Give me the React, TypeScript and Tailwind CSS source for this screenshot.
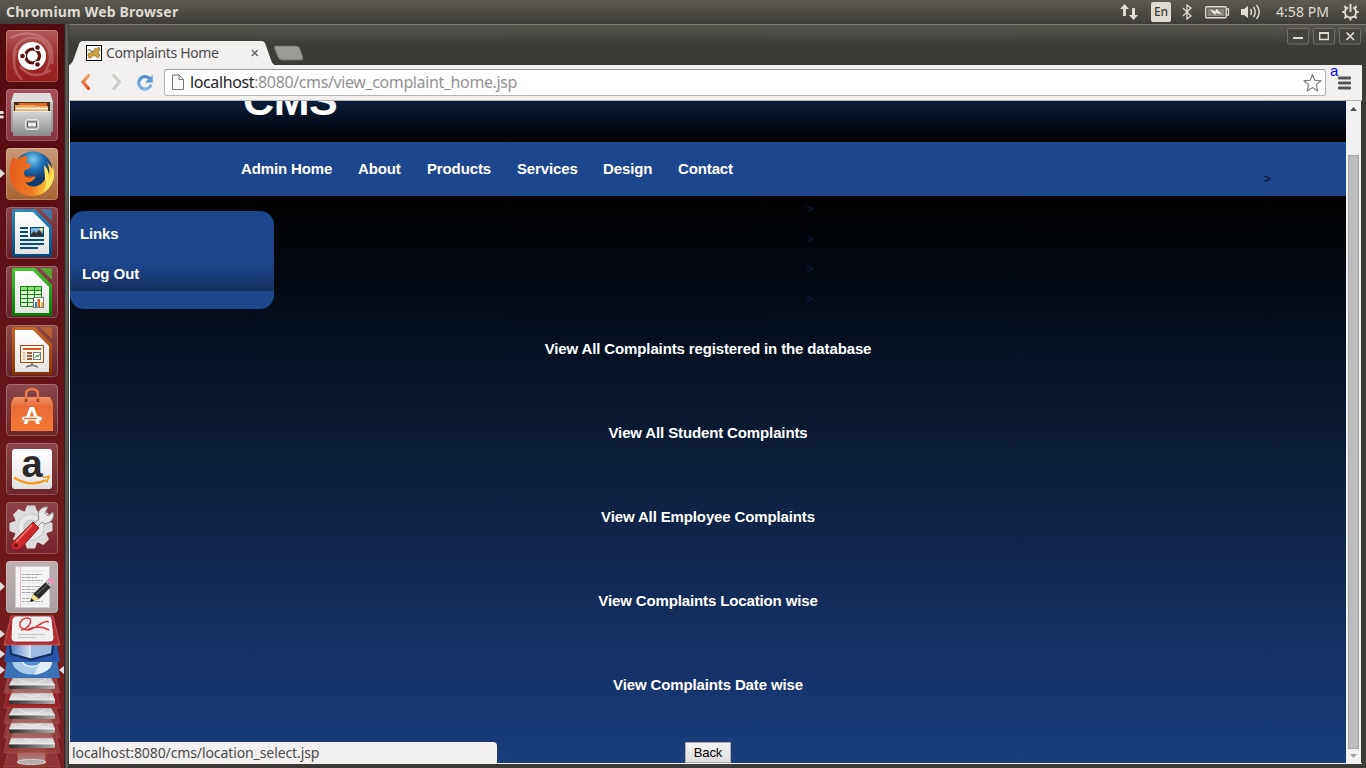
import React from 'react';

const ui = "font-['Noto_Sans','Open_Sans',sans-serif]";

function Tile({ tint, children, marks = 0 }: { tint: string; children: React.ReactNode; marks?: number }) {
  return (
    <div className="relative flex h-[52px] w-[64px] shrink-0 pl-[6px]">
      {marks === 1 && (
        <svg className="absolute left-0 top-[21px]" width="5" height="9">
          <path d="M0 0 L5 4.5 L0 9z" fill="#ddd" />
        </svg>
      )}
      {marks === 2 && (
        <svg className="absolute left-0 top-[22px]" width="5" height="8">
          <path d="M0 0H3L4 1.5L3 3H0zM0 4.5H3L4 6L3 7.500H0z" fill="#ddd" />
        </svg>
      )}
      <div className={`h-[52px] w-[52px] overflow-hidden rounded-[4px] ${tint}`}>
        <svg width="52" height="52" viewBox="0 0 52 52">
          {children}
          <rect x=".5" y=".5" width="51" height="51" rx="3.500" fill="none" stroke="#fff" strokeOpacity=".22" />
        </svg>
      </div>
    </div>
  );
}

function OfficeDoc({ id, light, dark, children }: { id: string; light: string; dark: string; children: React.ReactNode }) {
  return (
    <>
      <defs>
        <linearGradient id={id} x2="0" y2="1">
          <stop stopColor={light} />
          <stop offset="1" stopColor={dark} />
        </linearGradient>
        <linearGradient id={id + 'p'} x2="0" y2="1">
          <stop stopColor="#fff" />
          <stop offset="1" stopColor="#e2e2e2" />
        </linearGradient>
      </defs>
      <path d="M8 2H29L46 19V48Q46 50 44 50H8Q6 50 6 48V4Q6 2 8 2z" fill={`url(#${id})`} />
      <path d="M9 5H27L43 21V47H9z" fill={`url(#${id}p)`} />
      <path d="M34 2H44Q46 2 46 4V14z" fill={light} opacity=".75" />
      {children}
    </>
  );
}

function FoldedTiles() {
  const disks = [
    { top: 678, bottom: 689, fold: 693, tint: '#9b4a4a' },
    { top: 689, bottom: 704, fold: 708, tint: '#a3222a' },
    { top: 708, bottom: 719, fold: 723, tint: '#9b4040' },
    { top: 719, bottom: 733, fold: 738, tint: '#9b4040' },
    { top: 733, bottom: 748, fold: 753, tint: '#9b4040' },
  ];
  return (
    <svg width="64" height="155" viewBox="0 613 64 155" className="shrink-0">
      <defs>
        <linearGradient id="disk" x2="0" y2="1">
          <stop stopColor="#bdbdbd" />
          <stop offset="1" stopColor="#e6e6e6" />
        </linearGradient>
        <linearGradient id="edge">
          <stop stopColor="#2c2c2c" />
          <stop offset="1" stopColor="#b0b0b0" />
        </linearGradient>
        <linearGradient id="boxL">
          <stop stopColor="#4f7fc4" />
          <stop offset="1" stopColor="#d8e4f4" />
        </linearGradient>
        <linearGradient id="bin" x2="0" y2="1">
          <stop stopColor="#9a5252" />
          <stop offset="1" stopColor="#b98484" />
        </linearGradient>
      </defs>
      <path d="M9 750H55L60 767H4z" fill="#9a4040" opacity=".7" stroke="#b96464" strokeWidth=".7" />
      <path d="M17 748H46L45 762H18z" fill="url(#bin)" />
      <ellipse cx="31.500" cy="762" rx="14.500" ry="2.500" fill="#b5b0ae" stroke="#d8d4d2" />
      {[...disks].reverse().map(({ top, bottom, fold, tint }) => (
        <g key={top}>
          <path d={`M8 ${top - 2}H56L60 ${fold}H4z`} fill={tint} opacity=".75" stroke="#c06868" strokeWidth=".5" />
          <path d={`M13 ${top}H51L55 ${bottom - 4}H9z`} fill="url(#disk)" />
          <path d={`M18 ${top + 1}Q32 ${bottom - 1} 46 ${top + 1}`} fill="none" stroke="#f4f4f4" strokeWidth=".8" />
          <path d={`M9 ${bottom - 4}H55V${bottom - 1}L54 ${bottom}H10L9 ${bottom - 1}z`} fill="url(#edge)" />
          <path d={`M9 ${bottom - 4}H55`} stroke="#f2f2f2" strokeWidth=".8" />
        </g>
      ))}
      <path d="M7 660H57L60 678H4z" fill="#3a72b5" />
      <path d="M12 660H52Q52 667 44 672Q32 677 20 672Q12 667 12 660z" fill="#a9cdec" />
      <path d="M34 675Q37 668 41 662H52Q52 672 34 675z" fill="#deebf8" />
      <ellipse cx="32" cy="662" rx="9" ry="4.500" fill="#5b93cf" stroke="#eef6fd" strokeWidth="1.500" />
      <path d="M7 644H57L60 662H4z" fill="#2856a8" />
      <path d="M10 645H31V659L11 654z" fill="url(#boxL)" />
      <path d="M31 645H53L52 654L31 659z" fill="#9bbbe4" />
      <path d="M10 645L11 654L31 659.500L52 654L53 645" fill="none" stroke="#122e62" strokeWidth="2.200" />
      <path d="M11 616H53L60 645H4z" fill="#b02e34" stroke="#d07070" strokeWidth=".7" />
      <path d="M15 617H49Q51 617 51 620L53 638Q53 641 50 641H15Q12 641 12 638L13 619z" fill="#f1f0f0" stroke="#fff" />
      <path d="M21 630C29 629 34 619 28 618C20 617 15 629 27 630C36 630 43 619 49 622M27 630Q38 624 49 630" fill="none" stroke="#dc3434" strokeWidth="1.500" />
      <path d="M18 634.500H45M18 637.500H36" stroke="#bbb" strokeWidth=".8" />
      <path d="M0 630L5 634L0 638zM0 650L5 654L0 658zM0 666L5 670L0 674zM64 666L59 670L64 674z" fill="#ddd" />
    </svg>
  );
}

function Launcher() {
  return (
    <nav className="flex h-[744px] w-[64px] shrink-0 flex-col bg-linear-to-b from-[#520b0f] via-[#68151b] to-[#7c2020] pt-[6px]">
      <div className="flex flex-col gap-[7px]">
        <Tile tint="bg-linear-to-b from-[#b25a5a] via-[#9c2e2e] to-[#981c1c]">
          <path d="M8 30C6 14 18 6 30 8C45 12 48 30 38 44M14 36Q26 52 45 40M4 8Q24 -2 40 10Q48 18 46 34M16 50Q4 38 10 20" fill="none" stroke="#e6b0b0" strokeWidth="2.500" opacity=".35" />
          <circle cx="26" cy="26" r="14" fill="#fff" />
          <circle cx="26.500" cy="26" r="7" fill="none" stroke="#601015" strokeWidth="3.200" />
          <g fill="#601015" stroke="#fff" strokeWidth="1.300">
            <circle cx="16.500" cy="26" r="3" />
            <circle cx="31.500" cy="17.500" r="3" />
            <circle cx="31.500" cy="34.500" r="3" />
          </g>
        </Tile>
        <Tile tint="bg-linear-to-b from-[#a24d59] to-[#863440]" marks={2}>
          <defs>
            <linearGradient id="cab" x2="0" y2="1">
              <stop stopColor="#d6d6d6" />
              <stop offset="1" stopColor="#8a8a8a" />
            </linearGradient>
          </defs>
          <path d="M8 4H44L47 13V43H5V13z" fill="url(#cab)" />
          <path d="M5 13L8 4H44L47 13z" fill="#dedede" />
          <path d="M8 13H44V23H8z" fill="#4a2b1e" />
          <path d="M13 14H41V21H13z" fill="#e06a28" />
          <path d="M9 16H28L30 17H42V22H9z" fill="#f2a458" />
          <path d="M10 19.500H42" stroke="#fff" strokeWidth="1.300" />
          <path d="M7 22H45V47H7z" fill="url(#cab)" />
          <path d="M7 22.500H45" stroke="#eee" />
          <rect x="19.500" y="30.500" width="13" height="10" rx="2" fill="#bbb" stroke="#e8e8e8" />
          <rect x="21.500" y="33" width="9" height="5" fill="#eee" stroke="#555" />
        </Tile>
        <Tile tint="bg-linear-to-b from-[#c99a78] to-[#a66432]" marks={1}>
          <defs>
            <radialGradient id="globe" cx=".5" cy=".2">
              <stop stopColor="#7ecbf0" />
              <stop offset=".5" stopColor="#2075ba" />
              <stop offset="1" stopColor="#123a72" />
            </radialGradient>
            <linearGradient id="fox" x2="1" y2=".2">
              <stop stopColor="#e4571d" />
              <stop offset=".65" stopColor="#f07a20" />
              <stop offset="1" stopColor="#ffd23d" />
            </linearGradient>
          </defs>
          <circle cx="27" cy="23" r="19.500" fill="url(#globe)" />
          <path d="M7 9Q9 12 12 11Q16 7 22 9L20 14L25 17L24 20L19 22Q17 25 19 28Q23 29 28 28Q31 29 28 31Q24 36 19 34Q23 40 31 38Q40 35 41 24L43 27Q44 20 41 14Q48 20 48 29C46 41 37 48 26 48C13 48 4 38 4 27Q3 16 7 9z" fill="url(#fox)" />
          <path d="M38 17Q45 24 42 33L46 27Q48 20 44 14Q49 22 48 29Q45 40 38 44Q42 36 39 30z" fill="#ffe763" />
          <path d="M19 28Q23 31 29 28" stroke="#a92f16" fill="none" />
        </Tile>
        <Tile tint="bg-linear-to-b from-[#8a454a] to-[#632027]">
          <OfficeDoc id="writer" light="#3188bd" dark="#064879">
            <path d="M14 21H22M14 25H22M14 29H22M14 33H38M14 37H38M14 41H32" stroke="#064c7c" strokeWidth="2" />
            <rect x="24.500" y="20.500" width="13" height="9" fill="#79b6df" stroke="#064c7c" />
            <path d="M25 29V27L28 24L30 26L33 23L37 27V29z" fill="#333" />
            <circle cx="35.500" cy="22.500" r="1.500" fill="#ffe16b" />
          </OfficeDoc>
        </Tile>
        <Tile tint="bg-linear-to-b from-[#8a454a] to-[#632027]">
          <OfficeDoc id="calc" light="#4bc532" dark="#087405">
            <path d="M14.500 20.500H35.500V40.500H14.500z" fill="#e2ffdb" stroke="#12840e" />
            <path d="M15 21H35V24H15z" fill="#8fe27d" />
            <path d="M14 24.500H36M14 28.500H36M14 32.500H36M14 36.500H36M21.500 20V41M28.500 20V41" stroke="#12840e" />
            <rect x="27.500" y="31.500" width="10" height="10" fill="#fff" stroke="#777" />
            <path d="M29 36H31V41H29z" fill="#1489ce" />
            <path d="M31.500 33H34V41H31.500z" fill="#e35f13" />
            <path d="M35 36H37V41H35z" fill="#f2ac26" />
          </OfficeDoc>
        </Tile>
        <Tile tint="bg-linear-to-b from-[#914b45] to-[#632027]">
          <OfficeDoc id="impress" light="#c8672d" dark="#843100">
            <rect x="14.500" y="20.500" width="23" height="17" fill="#fff4ed" stroke="#a84712" />
            <path d="M17 24H35" stroke="#d35b18" strokeWidth="2" />
            <path d="M17 28H19M17 31H19M17 34H19" stroke="#e09a6c" strokeWidth="1.700" />
            <path d="M21 28H26M21 31H26M21 34H26" stroke="#842f00" strokeWidth="1.700" />
            <rect x="27.500" y="27.500" width="7" height="7" fill="#fff" stroke="#777" />
            <path d="M29 33L31 30L32 32L34 29" stroke="#33992b" fill="none" />
            <path d="M26 38V40L20 42M26 40L32 42" stroke="#777" fill="none" strokeWidth="1.800" />
          </OfficeDoc>
        </Tile>
        <Tile tint="bg-linear-to-b from-[#8b4749] to-[#6c2529]">
          <defs>
            <linearGradient id="bag" x2="0" y2="1">
              <stop stopColor="#ed9267" />
              <stop offset=".3" stopColor="#e96b36" />
              <stop offset="1" stopColor="#f47735" />
            </linearGradient>
          </defs>
          <path d="M8 13H44L47 19V47H5V19z" fill="url(#bag)" />
          <path d="M20 18V10Q20 5 26 5Q32 5 32 10V18" fill="none" stroke="#e8794a" strokeWidth="2.500" />
          <path d="M20 15V18M32 15V18" stroke="#9d3e20" strokeWidth="2.500" />
          <text x="26" y="40" textAnchor="middle" fontFamily="Liberation Sans" fontSize="24" fontWeight="700" fill="#fff">A</text>
          <rect x="16" y="32.500" width="20" height="4" rx="2" fill="#fff" />
          <path d="M18 34.500H31" stroke="#ec7136" strokeWidth="1.300" />
        </Tile>
        <Tile tint="bg-linear-to-b from-[#8e4549] to-[#6c252b]">
          <defs>
            <linearGradient id="amz" x2="0" y2="1">
              <stop stopColor="#fff" />
              <stop offset="1" stopColor="#e1e1e1" />
            </linearGradient>
          </defs>
          <rect x="6" y="6" width="40" height="40" rx="3" fill="url(#amz)" />
          <text x="26" y="33.500" textAnchor="middle" fontFamily="Liberation Sans" fontSize="38" fontWeight="700" fill="#292929">a</text>
          <path d="M8 34.500Q24 45 40 37" fill="none" stroke="#f79a18" strokeWidth="2.300" />
          <path d="M37 34.500L43 33.500L40.500 39.500" fill="none" stroke="#f79a18" strokeWidth="1.700" />
        </Tile>
        <Tile tint="bg-linear-to-b from-[#8d4147] to-[#78212a]">
          <g transform="translate(25 25)">
            {[0, 45, 90, 135].map((angle) => (
              <path key={angle} d="M-6 -16L-4 -21.500H4L6 -16V16L4 21.500H-4L-6 16z" fill="#dcdcdc" transform={`rotate(${angle})`} />
            ))}
            <circle r="17" fill="#dcdcdc" />
            <circle r="13" fill="#e8e8e8" stroke="#c8c8c8" />
            <circle r="7" fill="#d0d0d0" stroke="#bbb" />
          </g>
          <path d="M26 23L33 17C30 9 36 4 42 5L39 11L42 14L47 10Q49 18 42 21Q38 23 36 20L29 27z" fill="#e9e9e9" stroke="#888" />
          <path d="M27 20L33 26L15 46Q10 50 6 46Q4 43 8 39z" fill="#cc2a2c" stroke="#921b21" />
          <path d="M26 23L10 40" stroke="#ee7770" strokeWidth="1.800" />
          <circle cx="10" cy="43.500" r="2" fill="#701217" />
        </Tile>
        <Tile tint="bg-linear-to-b from-[#bfb0b0] to-[#a99e9e]" marks={1}>
          <rect x="9.500" y="5.500" width="34" height="41" fill="#f5f5f5" stroke="#cdcdcd" />
          <path d="M14.500 6V46" stroke="#f3b6b6" />
          <path d="M12 10H41M12 22H41M12 34H41M12 43H41" stroke="#d9e3ef" strokeWidth=".8" />
          <path d="M16 13.500H36M16 16.500H31M16 19.500H37M16 25.500H35M16 28.500H30M16 31.500H33M16 37.500H29M16 40.500H37" stroke="#a2a2a2" strokeWidth=".9" strokeDasharray="3 .7 5 .7" />
          <path d="M24 41L27 33L41 20L46 25L33 38z" fill="#2b2b2b" />
          <path d="M24 41L27 33L33 38z" fill="#f3e48a" />
          <path d="M24 41L25.500 37.500L28 39.500z" fill="#111" />
          <path d="M39 21L41 19L47 24L45 26.500z" fill="#bbb" />
          <path d="M41 19L43 17Q46 16 48 20Q48 22 47 24z" fill="#ec91bb" />
          <path d="M31 33L43 22" stroke="#777" />
        </Tile>
      </div>
      <FoldedTiles />
    </nav>
  );
}

function StatusIcons() {
  return (
    <div className="flex items-center">
      <svg width="18" height="24" viewBox="1120 0 18 24" fill="#dfdbd2">
        <path d="M1120 9L1124.500 4L1129 9H1126V16H1123V9zM1129 15H1132V8H1135V15H1138L1133.500 20z" />
      </svg>
      <div className={`ml-[13px] flex h-5 w-5 items-center justify-center rounded-[2px] bg-[#dfdbd2] text-[12px] font-medium text-[#403f3a] ${ui}`}>En</div>
      <svg className="ml-[10px]" width="12" height="24" viewBox="0 0 12 24" fill="none" stroke="#dfdbd2" strokeWidth="1.300">
        <path d="M2 8L10 16L6 19V5L10 8L2 16" />
      </svg>
      <svg className="ml-[12px]" width="25" height="24" viewBox="0 0 25 24">
        <rect x=".7" y="6.700" width="20.500" height="11" rx="1" fill="none" stroke="#dfdbd2" strokeWidth="1.400" />
        <rect x="2.500" y="8.500" width="17" height="7.500" fill="#88857c" />
        <path d="M22 9H23.500V15H22" fill="none" stroke="#dfdbd2" strokeWidth="1.300" />
        <path d="M5 9.500L11 11.500V8.500L17 14.500L10.500 12.800V15.500z" fill="#f0ece3" />
      </svg>
      <svg className="ml-[11px]" width="21" height="24" viewBox="0 0 21 24">
        <path d="M0 9H3L7 6V18L3 15H0z" fill="#dfdbd2" />
        <path d="M9.500 9Q11.500 12 9.500 15M12.500 7Q16 12 12.500 17M15.500 5Q21 12 15.500 19" fill="none" stroke="#dfdbd2" strokeWidth="1.400" />
      </svg>
      <span className={`-mt-px ml-[14px] w-[54px] whitespace-nowrap text-[14px] tracking-[0.05px] text-[#dfdbd2] ${ui}`}>4:58 PM</span>
      <svg className="ml-[12px]" width="17" height="24" viewBox="0 0 17 24" fill="none" stroke="#dfdbd2">
        <path d="M6 7.300Q3 8.500 3 12Q3 17.500 8.500 17.500Q14 17.500 14 12Q14 8.500 11 7.300" strokeWidth="1.800" />
        <path d="M8.500 4V12" strokeWidth="2" />
        <path d="M2.500 12H.2M14.500 12H16.800M4.500 16L2.300 18.200M12.500 16L14.700 18.200M8.500 18V20.500M4 8L2.300 6M13 8L14.700 6" strokeWidth="2" />
      </svg>
    </div>
  );
}

function WindowButtons() {
  return (
    <div className="flex gap-[4px]">
      <svg width="22" height="17" viewBox="0 0 22 17" fill="none">
        <rect x=".5" y=".5" width="21" height="15.500" rx="1.500" fill="#45443f" stroke="#706f69" />
        <path d="M6 10H16" stroke="#e2e0d8" strokeWidth="2" />
      </svg>
      <svg width="22" height="17" viewBox="0 0 22 17" fill="none">
        <rect x=".5" y=".5" width="21" height="15.500" rx="1.500" fill="#45443f" stroke="#706f69" />
        <path d="M6.700 5H15.300V11.500H6.700z" stroke="#e2e0d8" strokeWidth="1.300" />
        <path d="M6 5H16" stroke="#e2e0d8" strokeWidth="1.700" />
      </svg>
      <svg width="22" height="17" viewBox="0 0 22 17" fill="none">
        <rect x=".5" y=".5" width="21" height="15.500" rx="1.500" fill="#45443f" stroke="#706f69" />
        <path d="M7.500 4.500L15 12M15 4.500L7.500 12" stroke="#e2e0d8" strokeWidth="1.600" />
      </svg>
    </div>
  );
}

function TitleBar() {
  return (
    <header className="flex h-[40px] items-start justify-between bg-linear-to-b from-[#57554e] via-[#3c3b37] to-[#3c3b37] pr-[5px]">
      <div className="flex h-[40px] items-end">
        <div className="relative h-[25px] w-[205px]">
          <svg className="absolute left-0 top-0" width="205" height="25" viewBox="69 40 205 25">
            <path d="M69 65Q72 64 74 58L79 44Q80 41 83 41H261Q264 41 265 43L271 60Q272 64 275 65z" fill="#f2f1f0" />
            <rect x="86.500" y="45.500" width="15" height="15" fill="#fff" stroke="#000" />
            <path d="M88 56Q87 53 90 53L94 51L95 48L97 49L99 47L100 50L98 53L100 55L98 58L96 56H92L91 58H89z" fill="#d2a03d" stroke="#7d5c20" strokeWidth=".6" />
            <path d="M87.500 51Q89 48 91 51L93 52" fill="none" stroke="#222" strokeWidth=".8" />
            <path d="M251.800 50L257.800 56M257.800 50L251.800 56" stroke="#666" strokeWidth="1.500" />
          </svg>
          <span className={`relative ml-[37px] block w-[115px] whitespace-nowrap pt-[1px] text-[14px] leading-[24px] tracking-[-0.36px] text-[#4c4c4c] ${ui}`}>Complaints Home</span>
        </div>
        <svg width="32" height="25" viewBox="0 0 32 25">
          <path d="M1 6H22Q25 6 26 9L29 18Q29 20 27 20H8Q5 20 4 17L0 7z" fill="#9b9a97" stroke="#706f6a" />
        </svg>
      </div>
      <div className="pt-[3px]"><WindowButtons /></div>
    </header>
  );
}

function Toolbar() {
  return (
    <div className="flex h-[36px] items-center border-b border-[#b2b1ae] bg-[#f2f1f0]">
      <svg width="95" height="35" viewBox="69 65 95 35" fill="none" strokeLinecap="round">
        <defs>
          <linearGradient id="back" x2="0" y2="1">
            <stop stopColor="#f0a070" />
            <stop offset="1" stopColor="#e2531f" />
          </linearGradient>
          <linearGradient id="reload" x2="0" y2="1">
            <stop stopColor="#4f8fd0" />
            <stop offset="1" stopColor="#85b4e2" />
          </linearGradient>
        </defs>
        <path d="M88.500 75.500L83 82L88.500 88.500" stroke="url(#back)" strokeWidth="3.200" />
        <path d="M114 75.500L119.500 82L114 88.500" stroke="#cfcdca" strokeWidth="3.200" />
        <path d="M149 78A6.300 6.300 0 1 0 150.500 86" stroke="url(#reload)" strokeWidth="3.200" />
        <path d="M152.700 75V82.500H145z" fill="#5a98d6" />
      </svg>
      <div className="flex h-[27px] w-[1162px] items-center rounded-[3px] border border-[#b5b3af] border-t-[#999] bg-white pl-[7px] pr-[3px]">
        <svg width="12" height="17" viewBox="0 0 12 17" fill="#fafafa" stroke="#777">
          <path d="M.5 1H7L11.500 5.500V15.500H.5zM7 1V5.500H11.500" />
        </svg>
        <span className={`-mt-[2px] ml-[6px] grow whitespace-nowrap text-[16px] leading-6 tracking-[-0.38px] text-[#929292] ${ui}`}><span className="text-[#252525]">localhost</span>:8080/cms/view_complaint_home.jsp</span>
        <svg width="20" height="20" viewBox="0 0 20 20" fill="#fff" stroke="#808080" strokeWidth="1.200" strokeLinejoin="round">
          <path d="M10.500 1.500L12.800 7.300L19 7.700L14.300 11.700L15.800 18L10.500 14.500L5.200 18L6.700 11.700L2 7.700L8.200 7.300z" />
        </svg>
      </div>
      <div className="relative ml-[12px] h-[14px] w-[13px]">
        <span className="absolute left-[-8px] top-[-13px] font-['Liberation_Sans',sans-serif] text-[15px] leading-[16px] text-[#0000ff]">a</span>
        <svg width="13" height="14"><path d="M1 2H12M1 7H12M1 12H12" stroke="#555" strokeWidth="2.800" strokeLinecap="round" /></svg>
      </div>
    </div>
  );
}

const NAV = [
  { label: 'Admin Home', width: 'w-[91px]' },
  { label: 'About', width: 'w-[43px]' },
  { label: 'Products', width: 'w-[64px]' },
  { label: 'Services', width: 'w-[60px]' },
  { label: 'Design', width: 'w-[49px]' },
  { label: 'Contact', width: 'w-[55px]' },
];

const VIEWS = [
  'View All Complaints registered in the database',
  'View All Student Complaints',
  'View All Employee Complaints',
  'View Complaints Location wise',
  'View Complaints Date wise',
];

function CmsPage() {
  return (
    <main className="relative h-[662px] w-[1276px] overflow-hidden bg-linear-to-b/srgb from-black from-14% to-[#183e7c] font-['Liberation_Sans',Arial,sans-serif] text-[15px] font-bold leading-[18px] tracking-[-0.13px] text-white">
      <div className="h-[41px] overflow-hidden bg-linear-to-b/srgb from-[#0a1c3a] to-black pl-[173px]">
        <h1 className="mt-[-16px] text-[43px] leading-[30px] tracking-[-0.4px]">CMS</h1>
      </div>
      <nav className="flex h-[54px] items-center gap-[26px] bg-[#1c468d] pl-[171px] pr-[75px]">
        {NAV.map(({ label, width }) => <span key={label} className={`whitespace-nowrap ${width}`}>{label}</span>)}
        <span className="ml-auto pt-[20px] text-[13px] font-normal text-[#080f20]">&gt;</span>
      </nav>
      <div className="flex h-[126px] items-start pt-[15px]">
        <aside className="h-[98px] w-[204px] rounded-[14px] bg-[#1c468d] pt-[14px]">
          <h2 className="pl-[10px]">Links</h2>
          <div className="mt-[16px] h-[32px] border-b border-[#163361] bg-linear-to-b/srgb from-[#1c468d] from-15% to-[#14305e] pl-[12px] pt-[6px] tracking-[-0.03px]">Log Out</div>
        </aside>
        <div className="ml-[532px] mt-[-17px] text-[13px] font-normal leading-[30px] text-[#0b1f40]">
          {[0, 1, 2, 3].map((n) => <div key={n}>&gt;</div>)}
        </div>
      </div>
      <div className="flex flex-col items-center gap-[66px] pt-[18px]">
        {VIEWS.map((label) => <span key={label}>{label}</span>)}
      </div>
      <div className="mt-[48px] flex justify-center">
        <button className="h-[21px] w-[46px] border border-[#a9a9a9] bg-linear-to-b from-[#f4f4f4] to-[#ddd] text-[13px] font-normal leading-[18px] text-black">Back</button>
      </div>
      <div className={`absolute bottom-0 left-0 h-[21px] w-[427px] rounded-tr-[4px] bg-[#f2f1f0] pl-[2px] text-[14px] font-normal leading-[21px] tracking-[-0.1px] text-[#4b4b4b] ${ui}`}>localhost:8080/cms/location_select.jsp</div>
    </main>
  );
}

function Scrollbar() {
  return (
    <div className="flex h-[662px] w-[15px] flex-col items-center bg-[#f1f1f1]">
      <svg width="15" height="54"><path d="M4 10L7.500 6L11 10z" fill="#505050" /></svg>
      <div className="h-[594px] w-[11px] border border-[#a8a8a8] bg-[#bcbcbc]" />
      <svg width="15" height="14"><path d="M4 5H11L7.500 9z" fill="#a0a0a0" /></svg>
    </div>
  );
}

export default function App() {
  return (
    <div className="flex h-[768px] w-[1366px] flex-col overflow-hidden bg-[#3c3b37]">
      <header className="flex h-[24px] shrink-0 items-center justify-between bg-linear-to-b from-[#5c5a50] to-[#3e3d38] pl-[6px] pr-[7px]">
        <span className={`-mt-px text-[14px] font-bold tracking-[0.19px] text-[#dfdbd2] ${ui}`}>Chromium Web Browser</span>
        <StatusIcons />
      </header>
      <div className="flex h-[744px]">
        <Launcher />
        <div className="h-[744px] w-[5px] shrink-0 border-l border-[#302522] bg-linear-to-r from-[#4a4440] via-[#66645d] to-[#35342f]" />
        <section className="flex w-[1297px] flex-col border-t border-[#777670]">
          <TitleBar />
          <div className="flex w-[1293px] flex-col">
            <Toolbar />
            <div className="flex border-b border-l border-[#f2f1f0] pr-px">
              <CmsPage />
              <Scrollbar />
            </div>
          </div>
        </section>
      </div>
    </div>
  );
}
